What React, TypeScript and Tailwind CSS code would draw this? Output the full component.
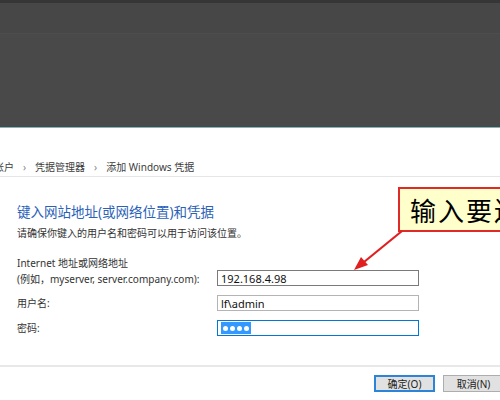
import React from "react";

const font = {
  fontFamily: '"Noto Sans", "Noto Sans CJK SC", sans-serif',
};

const Field = ({
  value,
  focused,
  hover,
}: {
  value?: string;
  focused?: boolean;
  hover?: boolean;
}) => (
  <div
    className={
      "h-[16px] w-[202px] border bg-white flex items-center px-[3px] text-[11px] leading-none text-[#111] " +
      (focused
        ? "border-[#0078d7]"
        : hover
        ? "border-[#7a7a7a]"
        : "border-[#b4b4b4]")
    }
  >
    {value}
    {focused && (
      <span className="h-[12px] px-[2px] bg-[#3399ff] flex items-center gap-[2px]">
        {[0, 1, 2, 3].map((i) => (
          <span key={i} className="w-[5px] h-[5px] rounded-full bg-white" />
        ))}
      </span>
    )}
  </div>
);

const Callout = () => (
  <>
    <div className="absolute left-[398px] top-[187px] h-[45px] w-[140px] bg-[#ffffcc] border-2 border-[#e02a2a] flex items-center pl-[10px] overflow-hidden">
      <span
        className="text-[26px] tracking-[2px] text-black whitespace-nowrap leading-none"
        style={{ fontFamily: '"Noto Sans CJK SC", serif' }}
      >
        输入要连接的地址
      </span>
    </div>
    <svg
      className="absolute left-0 top-0 pointer-events-none"
      width="500"
      height="400"
      viewBox="0 0 500 400"
    >
      <line
        x1="402"
        y1="231"
        x2="364"
        y2="262"
        stroke="#e02020"
        strokeWidth="2.2"
      />
      <polygon points="354,270 368,265 361,257" fill="#e02020" />
    </svg>
  </>
);

export default function App() {
  return (
    <div
      className="relative w-[500px] h-[400px] overflow-hidden bg-white flex flex-col"
      style={font}
    >
      {/* dimmed window behind the dialog */}
      <div className="h-[3px] bg-[#363636]" />
      <div className="h-[31px] bg-[#474747] border-b border-[#4d4d4d]" />
      <div className="h-[93px] bg-[#494949]" />
      <div className="h-px bg-[#82b4bb]" />

      {/* breadcrumb */}
      <div className="h-[49px] pt-[32px] border-b border-[#e6e6e6] flex gap-[9px] text-[10px] leading-[14px] text-[#3c3c3c] whitespace-nowrap -ml-[6px]">
        <span>帐户</span>
        <span className="text-[#888]">›</span>
        <span>凭据管理器</span>
        <span className="text-[#888]">›</span>
        <span>添加 Windows 凭据</span>
      </div>

      <div className="pl-[17px] flex flex-col">
        <h1 className="mt-[25px] text-[13.5px] leading-[20px] text-[#2b62b8] font-normal">
          键入网站地址(或网络位置)和凭据
        </h1>
        <p className="mt-[4px] text-[10px] leading-[14px] text-[#333]">
          请确保你键入的用户名和密码可以用于访问该位置。
        </p>

        <div className="mt-[15px] grid grid-cols-[200px_202px] gap-y-[8px] items-end text-[10px] leading-[16px] text-[#333]">
          <div>
            <div>Internet 地址或网络地址</div>
            <div>(例如，myserver, server.company.com):</div>
          </div>
          <div className="pb-[1px]">
            <Field value="192.168.4.98" hover />
          </div>
          <div>用户名:</div>
          <Field value="lf\admin" />
          <div className="mt-[1px]">密码:</div>
          <div className="mt-[1px]">
            <Field focused />
          </div>
        </div>
      </div>

      {/* footer */}
      <div className="mt-[29px] h-[2px] bg-[#e8e8e8]" />
      <div className="pt-[8px] flex justify-end gap-[8px] -mr-[4px] text-[10px] text-[#222]">
        <button className="h-[17px] w-[61px] bg-[#e1e1e1] border-2 border-[#2b84d8] flex items-center justify-center leading-none">
          确定(O)
        </button>
        <button className="h-[17px] w-[61px] bg-[#e1e1e1] border border-[#adadad] flex items-center justify-center leading-none">
          取消(N)
        </button>
      </div>

      <Callout />
    </div>
  );
}
